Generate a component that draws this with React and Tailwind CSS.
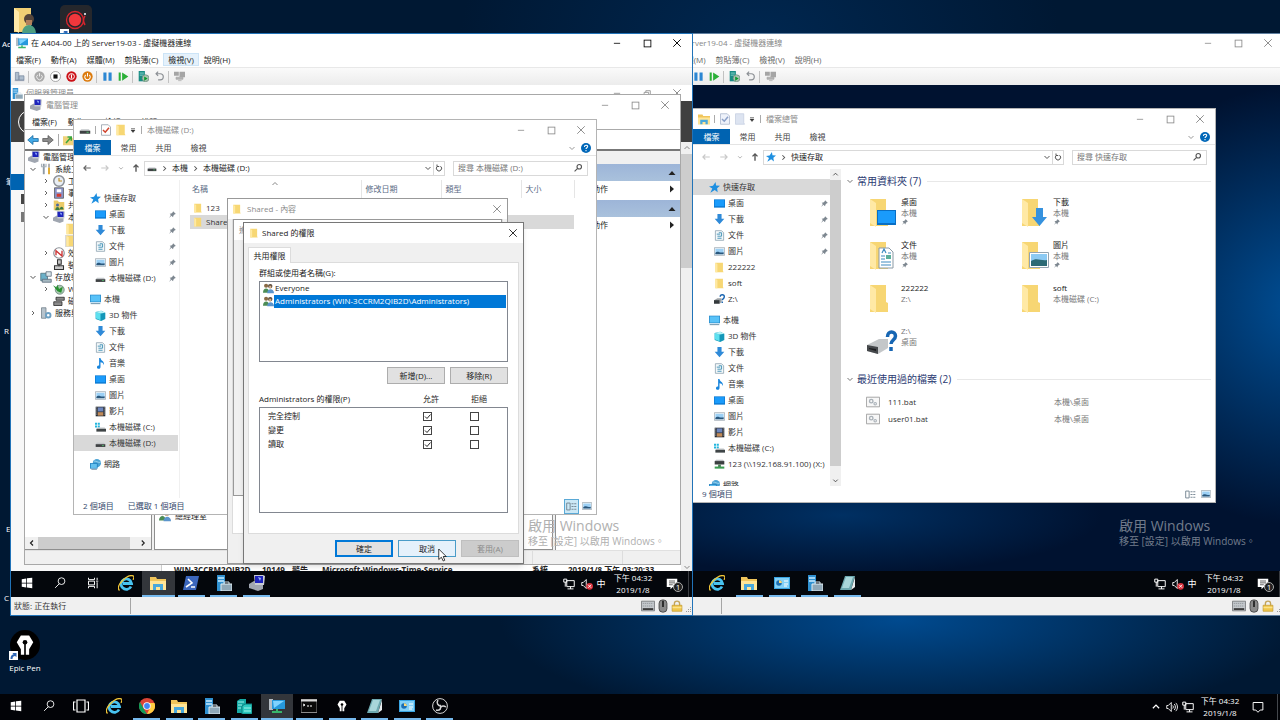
import React, { useState } from 'react';

const glyphs = {
    min: <path d="M3 8.5h10" stroke="currentColor" strokeWidth="1.3" />,
    max: <rect x="2" y="2" width="12" height="12" fill="none" stroke="currentColor" strokeWidth="1.5" />,
    restore: <path d="M2 6h8v8H2zM5 6V3h8v8h-3" fill="none" stroke="currentColor" strokeWidth="1.4" />,
    close: <path d="M2 2l12 12M14 2l-12 12" stroke="currentColor" strokeWidth="1.5" />,
    left: <path d="M14 8H3M7 4L3 8l4 4" fill="none" stroke="currentColor" strokeWidth="1.8" />,
    right: <path d="M2 8h11M9 4l4 4-4 4" fill="none" stroke="currentColor" strokeWidth="1.8" />,
    up: <path d="M8 14V3M4 7l4-4 4 4" fill="none" stroke="currentColor" strokeWidth="2.2" />,
    chevDown: <path d="M3 6l5 5 5-5" fill="none" stroke="currentColor" strokeWidth="2" />,
    chevUp: <path d="M3 10l5-5 5 5" fill="none" stroke="currentColor" strokeWidth="2" />,
    chevRight: <path d="M6 4l4 4-4 4" fill="none" stroke="currentColor" strokeWidth="1.8" />,
    chevLeft: <path d="M10 3L5 8l5 5" fill="none" stroke="currentColor" strokeWidth="2.4" />,
    triUp: <path d="M1 12l7-8 7 8z" fill="currentColor" />,
    triRight: <path d="M4 1l8 7-8 7z" fill="currentColor" />,
    quick: <path d="M4 5h8M4 8h8l-4 5z" fill="currentColor" stroke="currentColor" />,
    refresh: <path d="M5 4.500A5.200 5.200 0 1 0 11 4.500M4 1v4h4.500" fill="none" stroke="currentColor" strokeWidth="2" />,
    search: (
        <g fill="none" stroke="currentColor" strokeWidth="1.8">
            <circle cx="10" cy="6" r="3.600" />
            <path d="M7.500 8.500l-5 5" />
        </g>
    ),
    help: (
        <g>
            <circle cx="8" cy="8" r="8" fill="#0067b8" />
            <path d="M5.500 6.200c0-3.600 5.200-3.400 5.200-.5C10.700 7.500 8 7.600 8 9.600M8 11.300v1.700" fill="none" stroke="#fff" strokeWidth="1.700" />
        </g>
    ),
    pin: <path d="M9 2l5 5-2 .5-2.500 2.500-.5 3-3-3-4 4 3-5-2-2.500 3-.5L8.500 4z" fill="#7d8790" />,
    star: <path d="M9.500 0l.8 5 5.700.5-4.200 3.500.8 6-4.300-3.500L2 15.500l2.800-6L0 6.500l5.800-1z" fill="#1e8fe0" />,
    folder: (
        <g>
            <path d="M2 1h11v12l1 2H2z" fill="#f7d774" />
            <path d="M2 1l3 2v12H2z" fill="#ffe9a2" />
        </g>
    ),
    desktop: (
        <g>
            <path d="M0 2h16v12H0z" fill="#0b78d0" />
            <path d="M1 3h14v9H1z" fill="#1a9bfb" />
        </g>
    ),
    download: <path d="M5 0h6v7h4l-7 8-7-8h4z" fill="#2f8ad8" />,
    doc: (
        <g>
            <path d="M2 1h9l3 3v11H2z" fill="#f4f8fa" stroke="#7c95a3" />
            <path d="M4 6h5M7 4h4v5M5 9h6M5 12h6" fill="none" stroke="#4795b8" strokeWidth="1.400" />
        </g>
    ),
    picture: (
        <g>
            <path d="M.5 2.500h15v11H.5z" fill="#fff" stroke="#8796a2" />
            <path d="M2 4h12v8H2z" fill="#9cd0f5" />
            <path d="M2 10c4-4 6 1 12-1v3H2z" fill="#2a577c" />
        </g>
    ),
    drive: (
        <g>
            <path d="M3 7h10l2 2H1z" fill="#c2c6c9" />
            <path d="M1 9h14v4H1z" fill="#3e4143" />
            <path d="M10 11h3" stroke="#57d977" />
        </g>
    ),
    driveC: (
        <g>
            <path d="M0 1h3v3H0zM4 1h3v3H4zM0 5h3v3H0zM4 5h3v3H4z" fill="#22b5dd" />
            <path d="M4 8h10l2 2H2z" fill="#c2c6c9" />
            <path d="M2 10h14v4H2z" fill="#3f4547" />
        </g>
    ),
    driveNet: (
        <g>
            <path d="M1 3h14v5H1z" fill="#3b3f40" />
            <path d="M3 1h10l2 2H1z" fill="#b9bdc0" />
            <path d="M6 8h4v4H6z" fill="#4b7d55" />
            <path d="M1 11h14v3H1z" fill="#3b9c50" />
        </g>
    ),
    driveUnknown: (
        <g>
            <path d="M0 9l5-3h6v6l-3 2H0z" fill="#9fa4a7" />
            <path d="M0 9h8v5H0z" fill="#34393c" />
            <path d="M9 4c0-4 6-4 6 0 0 3-3 3-3 5M12 11v2" fill="none" stroke="#1763b0" strokeWidth="2" />
        </g>
    ),
    pc: (
        <g>
            <path d="M0 1h16v11H0z" fill="#2689c9" />
            <path d="M1 2h14v9H1z" fill="#58c2f8" />
            <path d="M1 14h14" stroke="#7196ad" strokeWidth="1.500" />
        </g>
    ),
    cube: (
        <g>
            <path d="M1 3l8-2 6 3v9l-6 3-8-3z" fill="#1397b8" />
            <path d="M1 3l7 2v10l-7-3z" fill="#5de0ef" />
            <path d="M1 3l8-2 6 3-7 1z" fill="#b4f3f8" />
        </g>
    ),
    music: <path d="M6 0h2c0 4 6 4 5 10-1-3-3-4-5-4v7c0 4-6 3-5 0 0-2 2-2 3-2z" fill="#1785dd" />,
    video: (
        <g>
            <path d="M1 1h14v14H1z" fill="#262b33" />
            <path d="M4 2h8v6H4z" fill="#6d86bd" />
            <path d="M4 9h8v5H4z" fill="#c08a58" />
            <path d="M2.500 2v12M13.500 2v12" stroke="#dedede" strokeDasharray="1.500 1.500" />
        </g>
    ),
    network: (
        <g>
            <circle cx="10" cy="6" r="6" fill="#4ba3d5" />
            <path d="M6 3c3 0 5 2 9 2" fill="none" stroke="#bfe6f8" />
            <path d="M0 6h11v8H0z" fill="#1879bb" />
            <path d="M1 7h9v6H1z" fill="#64c0ee" />
            <path d="M2 15.500h8" stroke="#476d87" />
        </g>
    ),
    checkDoc: (
        <g>
            <path d="M2 1h9l3 3v11H2z" fill="#fff" stroke="#8b96a3" />
            <path d="M4 8l3 3 5-6" fill="none" stroke="#d0432c" strokeWidth="2" />
        </g>
    ),
    checkDocOff: (
        <g>
            <path d="M2 1h9l3 3v11H2z" fill="#eef2fa" stroke="#a7b3c9" />
            <path d="M4 8l3 3 5-6" fill="none" stroke="#8ba0c8" strokeWidth="2" />
        </g>
    ),
    folderOff: <path d="M2 1h11v12l1 2H2z" fill="#dde4f1" stroke="#c4cee0" />,
    users: (
        <g>
            <circle cx="4.500" cy="4" r="3" fill="#8a6a45" />
            <path d="M0 14c0-8 9-8 9 0z" fill="#4c8c55" />
            <circle cx="10.500" cy="4.500" r="3.200" fill="#5c4b3b" />
            <path d="M9 4h3v4H9z" fill="#d9b38c" />
            <path d="M6 15c0-8 10-8 10 0z" fill="#5b95cc" />
        </g>
    ),
    server: (
        <g>
            <path d="M1 0h8v16H1z" fill="#3091d1" />
            <path d="M2 3h6M2 6h6" stroke="#c9ebff" strokeWidth="1.300" />
            <path d="M5 9h11v7H5z" fill="#8fa8b8" stroke="#e1edf3" />
            <path d="M8 9V7h5v2" fill="none" stroke="#d7e5ed" />
        </g>
    ),
    ie: (
        <g fill="none">
            <path d="M13 11.500A5.200 5.200 0 1 1 13.500 8.500H5" stroke="#48c3f0" strokeWidth="2.800" />
            <path d="M1.500 15.500C-3 11 9-1 15 .8c1.500.8.8 2.600 0 4" stroke="#f2c738" strokeWidth="1.300" />
        </g>
    ),
    explorer: (
        <g>
            <path d="M0 2h6l1 2h9v11H0z" fill="#f0c55b" />
            <path d="M0 6h16v9H0z" fill="#ffe597" />
            <path d="M3 15V9h10v6h-3v-3H6v3z" fill="#48a8dc" />
        </g>
    ),
    powershell: (
        <g>
            <path d="M3 1h13l-3 14H0z" fill="#3b66bd" />
            <path d="M5 4l4 4-6 4M8 12h4" fill="none" stroke="#fff" strokeWidth="1.600" />
        </g>
    ),
    mgmt: (
        <g>
            <path d="M0 9l5-3 9 3v5l-5 2-9-3z" fill="#a0a6b0" />
            <path d="M5 0h9l2 1-1 9H6z" fill="#c8ccd3" />
            <path d="M6 1h8v7H6z" fill="#1d23bb" />
            <path d="M9 2l2 4 1-3z" fill="#98b6ff" />
        </g>
    ),
    win: <path d="M1 3l6-1v5.500H1zM8 1.800L15 1v6.500H8zM1 8.500h6V14l-6-1zM8 8.500h7V15l-7-1z" fill="#fff" />,
    find: (
        <g fill="none" stroke="#fff" strokeWidth="1.200">
            <circle cx="10" cy="5.500" r="4.500" />
            <path d="M7 9l-5.500 5.500" />
        </g>
    ),
    taskOld: <path d="M2 1v2.500h8V1M2 15v-2.500h8V15M2 5.500h8v5H2zM13.500 1v3M13.500 7v8M12 5.500h3" fill="none" stroke="#fff" strokeWidth="1.300" />,
    taskView: <path d="M4 2h8v12H4zM2.500 4H.5v8h2M13.500 4h2v8h-2" fill="none" stroke="#fff" strokeWidth="1.200" />,
    chrome: (
        <g>
            <circle cx="8" cy="8" r="8" fill="#db4437" />
            <path d="M1 4l5 9 2 3A8 8 0 0 1 1 4z" fill="#0f9d58" />
            <path d="M8 5h7.500A8 8 0 0 1 8 16l4-8z" fill="#ffcd40" />
            <circle cx="8" cy="8" r="3.800" fill="#fff" />
            <circle cx="8" cy="8" r="2.900" fill="#4285f4" />
        </g>
    ),
    hyperv: (
        <g>
            <path d="M1 3l3-2h6v14H1z" fill="#16a9a5" />
            <path d="M9 6h7v10H6V8z" fill="#2cc9bf" stroke="#0b7f7d" />
            <path d="M2 4h6M2 7h4M2 10h3M8 10h7M8 13h7" stroke="#9ff3ea" />
        </g>
    ),
    vmconnect: (
        <g>
            <path d="M0 1h4v11H0z" fill="#b5bdc4" />
            <path d="M3 2h13v9H3z" fill="#2699dc" />
            <path d="M4 3h11l-10 7z" fill="#7ed3ff" />
            <path d="M3 14h10M8 11v3" stroke="#39b56b" strokeWidth="2" />
        </g>
    ),
    cmd: (
        <g>
            <path d="M0 1.500h16v13H0z" fill="#0a0a0a" stroke="#8b8b8b" />
            <path d="M0 2.500h16" stroke="#d8d8d8" strokeWidth="2" />
            <path d="M2 6l2 1-2 1M6 8h2M9 8h2" fill="none" stroke="#fff" />
        </g>
    ),
    pen: (
        <g>
            <path d="M5 1h6l3 5-3 5v4H5v-4L2 6z" fill="#fff" />
            <circle cx="8" cy="6" r="1.700" fill="#000" />
            <path d="M8 7v9" stroke="#000" strokeWidth="1.200" />
        </g>
    ),
    notepad: (
        <g>
            <path d="M5 1h10l-4 14H0z" fill="#6ea9b0" />
            <path d="M6 2h7L9 13H2z" fill="#a9d6da" />
            <path d="M11 15l4-3V2z" fill="#e9eef0" />
        </g>
    ),
    panel: (
        <g>
            <path d="M0 2h16v12H0z" fill="#3aa5e3" />
            <path d="M1 3h14v10H1z" fill="#82d0f7" />
            <circle cx="5" cy="8" r="2.800" fill="#1d6eb2" />
            <path d="M5 8V5.200A2.800 2.800 0 0 1 7.800 8z" fill="#ffd873" />
            <path d="M10 6h4M10 9h4M10 11h3" stroke="#fff" />
        </g>
    ),
    obs: (
        <g fill="none" stroke="#d5d5d5">
            <circle cx="8" cy="8" r="7.400" />
            <path d="M6 2c-2 3 0 6 3 6M14 9c-3-2-6-1-6 3M4 12c4 1 6-2 4-5" strokeWidth="1.500" />
        </g>
    ),
    trayNet: <path d="M5 3.500h10v8H5zM6 14.500h8M10 11.500v3M1 1.500h4v4H1zM3 5.500v6" fill="none" stroke="#fff" strokeWidth="1.300" />,
    mute: (
        <g>
            <path d="M1 6h2l4-4v12l-4-4H1z" fill="none" stroke="#fff" strokeWidth="1.200" />
            <circle cx="11.500" cy="11" r="4.500" fill="#d8313c" />
            <path d="M9.500 9l4 4M13.500 9l-4 4" stroke="#fff" strokeWidth="1.200" />
        </g>
    ),
    sound: <path d="M1 6h2l4-4v12l-4-4H1zM9 6c1 1 1 3 0 4M11 4c2 2 2 6 0 8M13 2.500c3 3 3 8 0 11" fill="none" stroke="#fff" strokeWidth="1.200" />,
    note: (
        <g>
            <path d="M1 1h14v11H9l-3 3v-3H1z" fill="#fff" />
            <path d="M4 4h8M4 6.500h8M4 9h5" stroke="#333" />
        </g>
    ),
    noteEmpty: <path d="M1.500 2h13v10H11l-3 3-3-3H1.500z" fill="none" stroke="#fff" strokeWidth="1.300" />,
    cad: (
        <g fill="#aebdcd" stroke="#71819a">
            <path d="M2 2h5v11H2z" />
            <path d="M7.500 7h7v6h-7z" />
            <path d="M1 14h14" />
        </g>
    ),
    powerOff: (
        <g fill="none">
            <circle cx="8" cy="8" r="7.500" fill="#aaa" />
            <path d="M5.500 5.500a4 4 0 1 0 5 0M8 3v5" stroke="#eee" strokeWidth="1.400" />
        </g>
    ),
    stop: (
        <g>
            <circle cx="8" cy="8" r="7.300" fill="#fff" stroke="#888" />
            <path d="M5 5h6v6H5z" fill="#111" />
        </g>
    ),
    shutdown: (
        <g fill="none">
            <circle cx="8" cy="8" r="7.500" fill="#cc1016" />
            <circle cx="8" cy="8" r="4.200" stroke="#fff" strokeWidth="1.400" />
            <path d="M8 5v6" stroke="#fff" strokeWidth="1.700" />
        </g>
    ),
    save: (
        <g fill="none">
            <circle cx="8" cy="8" r="7.500" fill="#dc7b0e" />
            <path d="M5.500 5.500a4 4 0 1 0 5 0M8 3v5" stroke="#fff" strokeWidth="1.500" />
        </g>
    ),
    pause: <path d="M2 2h4.500v12H2zM9.500 2H14v12H9.500z" fill="#2c87d3" />,
    reset: <path d="M1 2h3v12H1zM6 2l9 6-9 6z" fill="#2bb038" />,
    checkpoint: (
        <g>
            <path d="M1 0h9v15H1z" fill="#198c84" />
            <path d="M2.500 3h6M2.500 6h6" stroke="#b5f0e8" />
            <circle cx="11" cy="10.500" r="5" fill="#a9c4b2" stroke="#668877" />
            <path d="M9 8l5 3-5 3z" fill="#0a9b2b" />
        </g>
    ),
    revert: <path d="M3 4h6c6 0 6 9 0 9H6M6 1L3 4l3 3" fill="none" stroke="#8b8f94" strokeWidth="1.700" />,
    enhanced: (
        <g>
            <path d="M0 1h7v6H0zM8 1h8v8H8z" fill="#a5a5a5" />
            <path d="M3 9h10v3H3zM6 14h5" fill="#b2b2b2" stroke="#a5a5a5" />
        </g>
    ),
    backBlue: <path d="M8 2v4h7v4H8v4L1 8z" fill="#43a9e6" stroke="#19699f" />,
    forwardGray: <path d="M8 2v4H1v4h7v4l7-6z" fill="#8b8b8b" stroke="#555" />,
    upFolder: (
        <g>
            <path d="M0 3h6l1 2h9v10H0z" fill="#efd27b" />
            <path d="M4 12l7-8M6 4h5v5" fill="none" stroke="#3ca63c" strokeWidth="2" />
        </g>
    ),
    tools: (
        <g fill="none" strokeWidth="2.500">
            <path d="M5 1v14" stroke="#8e9aa5" />
            <path d="M2 1v4h6V1" stroke="#aab4bc" strokeWidth="1.500" />
            <path d="M12 6v9" stroke="#dfa829" />
            <path d="M12 1v5" stroke="#777" strokeWidth="1.500" />
        </g>
    ),
    clock: (
        <g>
            <circle cx="8" cy="8" r="7" fill="#e9eef4" stroke="#8a8f96" strokeWidth="2" />
            <path d="M8 4v4h4" fill="none" stroke="#c08a1d" strokeWidth="1.500" />
        </g>
    ),
    events: (
        <g>
            <path d="M2 1h12v14H2z" fill="#8a93c8" stroke="#555" />
            <path d="M5 3h6v4H5z" fill="#fff" />
            <path d="M5 9h6v4H5z" fill="#d63c2e" />
        </g>
    ),
    shares: (
        <g>
            <path d="M1 2h5l2 2h7v11H1z" fill="#ebcb68" />
            <circle cx="6" cy="8" r="2" fill="#4b69a0" />
            <path d="M3 15c0-6 6-6 6 0zM9 14c0-5 5-5 5 0z" fill="#3c7b42" />
        </g>
    ),
    perf: (
        <g>
            <circle cx="8" cy="8" r="7" fill="#fff" stroke="#8a8f96" strokeWidth="1.500" />
            <path d="M4 11V5l8 7V5" fill="none" stroke="#c33" strokeWidth="1.800" />
        </g>
    ),
    device: <path d="M6 1h5v6H6zM2 9h12v5H2zM8 7v3" fill="#c9c9c9" stroke="#333" strokeWidth="1.400" />,
    storage: (
        <g>
            <path d="M1 3h9v10H1z" fill="#6cb1c9" stroke="#4a6c78" />
            <path d="M8 1h7v6H8z" fill="#d9e6ea" stroke="#567" />
            <path d="M3 11h12v4H3z" fill="#a7bac2" stroke="#567" />
        </g>
    ),
    backup: (
        <g>
            <circle cx="9" cy="9" r="6" fill="#a9c9b0" stroke="#68807a" />
            <path d="M0 3l5 3 1-4 2 6 5-3-2 8-5-2z" fill="#27902f" />
        </g>
    ),
    disk: <path d="M4 3h11v4H4zM1 9h11v5H1z" fill="#8b8b8b" stroke="#222" />,
    services: (
        <g>
            <path d="M2 1h6v14H2z" fill="#b7c3cc" stroke="#6d7b86" />
            <circle cx="11" cy="11" r="3" fill="none" stroke="#6ca0c4" strokeWidth="2.500" />
        </g>
    ),
    bat: (
        <g>
            <path d="M.5 2.500h15v11H.5z" fill="#f7f7f7" stroke="#9c9c9c" />
            <circle cx="6" cy="7" r="2" fill="none" stroke="#a9b1b8" strokeWidth="1.600" />
            <circle cx="10.500" cy="10" r="1.400" fill="none" stroke="#a9b1b8" strokeWidth="1.300" />
        </g>
    ),
    details: <path d="M1 3h5v10H1zM8 4h3M12 4h3M8 8h3M12 8h3M8 12h3M12 12h3" fill="none" stroke="#6e7f8c" strokeWidth="1.300" />,
    lock: (
        <g>
            <path d="M4.500 8V5a3.500 3.500 0 0 1 7 0v3" fill="none" stroke="#c3a45a" strokeWidth="1.800" />
            <path d="M1.500 7h13v8h-13z" fill="#efc64b" stroke="#c39b31" />
            <path d="M2 10h12" stroke="#fbe28a" strokeWidth="2" />
        </g>
    ),
    mouse: (
        <g>
            <rect x="3.500" y="1" width="9" height="14" rx="4" fill="#8a8a8a" stroke="#444" />
            <path d="M8 2v7" stroke="#222" strokeWidth="2" />
        </g>
    ),
    keyboard: (
        <g>
            <path d="M.5 2.500h15v11H.5z" fill="#c4c8cc" stroke="#77797b" />
            <path d="M2 5h12M2 8h12" stroke="#8d9297" strokeDasharray="1.500 .8" />
            <path d="M2 11.500h12" stroke="#333" strokeWidth="2" />
        </g>
    ),
    grip: <path d="M12 4h2v2h-2zM8 8h2v2H8zM12 8h2v2h-2zM4 12h2v2H4zM8 12h2v2H8zM12 12h2v2h-2z" fill="#9a9a9a" />,
};

const Icon = ({ name, className = 'size-[10px]' }) => (
    <svg viewBox="0 0 16 16" className={`shrink-0 ${className}`} aria-hidden="true">
        {glyphs[name]}
    </svg>
);

const BigFolder = ({ overlay }) => (
    <svg viewBox="0 0 32 32" className="size-8 shrink-0" aria-hidden="true">
        {overlay !== 'drive' && (
            <g>
                <path d="M4 3h16v17l2 1v9H4z" fill="#f7d673" />
                <path d="M4 3l6 4v24l-6-4z" fill="#ffe9a5" />
            </g>
        )}
        {overlay === 'desktop' && (
            <g>
                <path d="M11 14h19v15H11z" fill="#0a6fc4" />
                <path d="M12 15h17v12H12z" fill="#1a9bfb" />
            </g>
        )}
        {overlay === 'download' && <path d="M18 12h7v9h4l-7.500 9-7.500-9h4z" fill="#3692de" />}
        {overlay === 'doc' && (
            <g>
                <path d="M13 9h10l4 4v16H13z" fill="#fff" stroke="#8b9aa5" />
                <path d="M16 14l2-4 2 4M22 14h3M15 17h4M15 20h4M15 23h10M15 26h10" fill="none" stroke="#3e8cc0" strokeWidth="1.200" />
                <path d="M20 16h5v4h-5z" fill="#5caf9b" />
            </g>
        )}
        {overlay === 'picture' && (
            <g>
                <path d="M11.500 13.500h19v15h-19z" fill="#fff" stroke="#94a4b0" />
                <path d="M13 15h16v12H13z" fill="#8ccaf3" />
                <path d="M13 22c6-4 9 0 16-1v6H13z" fill="#2c6a74" />
            </g>
        )}
        {overlay === 'drive' && (
            <g>
                <path d="M1 20l12-6h9v9l-10 6-11-3z" fill="#c4c7c9" />
                <path d="M1 20l11 2v7l-11-3z" fill="#45484b" />
                <path d="M3 23l7 1v2l-7-2z" fill="#1c1e20" />
                <path d="M21.500 12c0-7 8-6 8-1 0 4-4.500 4-4.500 8M25 22v4" fill="none" stroke="#1766b3" strokeWidth="3.500" />
            </g>
        )}
    </svg>
);

const WindowButtons = ({ middle = 'max', color = 'text-[#8a8a8a]' }) => (
    <div className={`ml-auto flex self-stretch ${color}`}>
        <button aria-label="最小化" className="flex w-[30px] items-center justify-center"><Icon name="min" /></button>
        <button aria-label="最大化" className="flex w-[30px] items-center justify-center"><Icon name={middle} className="size-[9px]" /></button>
        <button aria-label="關閉" className="flex w-[30px] items-center justify-center"><Icon name="close" /></button>
    </div>
);

const Clock = () => (
    <div className="w-12 text-center leading-3 text-white">
        <div>下午 04:32</div>
        <div>2019/1/8</div>
    </div>
);

const TaskButton = ({ item }) => (
    <button
        aria-label={item.label}
        className={`flex flex-1 flex-col items-center ${item.active ? 'bg-[#33363b]' : ''}`}
    >
        <span className="flex flex-1 items-center"><Icon name={item.icon} className={item.small ? 'size-3' : 'size-4'} /></span>
        <span className={`h-[2px] ${item.active ? 'w-full' : 'w-[27px]'} ${item.open ? 'bg-[#76b9ed]' : ''}`} />
    </button>
);

const GuestTaskbar = ({ items }) => (
    <div className="relative flex h-[26px] shrink-0 items-stretch bg-[#04070c]">
        <div className="flex w-[262px]">
            {items.map((item) => <TaskButton key={item.label} item={item} />)}
        </div>
        <div className="ml-auto flex items-center pr-[3px] text-white">
            <Icon name="trayNet" className="size-3" />
            <Icon name="mute" className="ml-[6px] size-3" />
            <span className="ml-[2px] w-3 text-center text-[9px]">中</span>
            <div className="ml-[2px]"><Clock /></div>
            <button aria-label="通知" className="relative ml-[3px] flex w-6 justify-center">
                <Icon name="note" className="size-3" />
                <span className="absolute top-1 left-[13px] flex size-[10px] items-center justify-center rounded-full border border-[#aaa] bg-[#222] leading-none">1</span>
            </button>
            <span className="ml-1 h-[26px] w-px bg-[#3a3d42]" />
        </div>
    </div>
);

const Watermark = ({ color }) => (
    <div className={`pointer-events-none absolute top-[432px] left-[517px] whitespace-nowrap ${color}`}>
        <div className="text-[14px] leading-[18px]">啟用 Windows</div>
        <div className="text-[10px] leading-3">移至 [設定] 以啟用 Windows。</div>
    </div>
);

const vmTools = ['cad', '|', 'powerOff', 'stop', 'shutdown', 'save', '|', 'pause', 'reset', '|', 'checkpoint', 'revert', '|', 'enhanced'];

const VmWindow = ({ title, active, className, children, status }) => (
    <section className={`absolute top-[33px] flex w-[683px] flex-col border bg-white ${active ? 'border-[#2173b8]' : 'border-[#5f7fa0]'} ${className}`}>
        <header className={`flex h-[18px] items-center pl-[5px] ${active ? 'text-[#222]' : 'text-[#888]'}`}>
            <Icon name="vmconnect" className="size-3" />
            <h1 className="ml-[3px]">{title}</h1>
            <WindowButtons color={active ? 'text-black' : 'text-[#8a8a8a]'} />
        </header>
        <div className={`flex h-[15px] items-center ${active ? 'text-[#222]' : 'text-[#666]'}`}>
            {['檔案(F)', '動作(A)', '媒體(M)', '剪貼簿(C)', '檢視(V)', '說明(H)'].map((name) => (
                <button
                    key={name}
                    className={`h-[13px] border px-1 ${active && name === '檢視(V)' ? 'border-[#cce4f7] bg-[#e5f1fb]' : 'border-transparent'}`}
                >
                    {name}
                </button>
            ))}
        </div>
        <div className="flex h-[18px] items-center border-t border-[#e8e8e8] bg-linear-to-b from-[#fafafa] to-[#ececec]">
            {vmTools.map((name, i) => (
                name === '|'
                    ? <span key={i} className="mr-[2px] ml-px h-3 w-px bg-[#c2c2c2]" />
                    : <button key={i} aria-label={name} className="flex w-4 justify-center"><Icon name={name} className="size-[11px]" /></button>
            ))}
        </div>
        <div className="relative flex h-[512px] flex-col overflow-hidden">{children}</div>
        <footer className="flex h-[18px] items-center bg-[#f0f0f0] pl-[3px] text-[#333]">
            <span className="w-[116px]">{status}</span>
            <span className="h-4 w-px bg-[#a5a5a5]" />
            <div className="ml-auto flex items-center gap-px">
                <Icon name="keyboard" className="size-[14px]" />
                <Icon name="mouse" className="size-[14px]" />
                <Icon name="lock" className="size-3" />
                <Icon name="grip" className="size-2 self-end" />
            </div>
        </footer>
    </section>
);

const NavTree = ({ groups, selected }) => (
    <div className="flex flex-col gap-[5px]">
        {groups.map((group) => (
            <ul key={group[0][1]}>
                {group.map(([icon, label, pinned], i) => (
                    <li key={label}>
                        <a
                            href="#"
                            className={`flex h-4 items-center whitespace-nowrap ${i === 0 ? 'gap-[3px] pl-[16px]' : 'gap-[3px] pl-[21px]'} ${selected === label ? 'bg-[#d9d9d9]' : ''}`}
                        >
                            <Icon name={icon} className="size-[11px]" />
                            {label}
                            {pinned && <Icon name="pin" className="mr-px ml-auto size-[9px]" />}
                        </a>
                    </li>
                ))}
            </ul>
        ))}
    </div>
);

const Explorer = ({ title, icon, docIcon, folderIcon, path, pathIcon, canGoBack, status, details, className, children }) => (
    <section className={`absolute flex w-[524px] flex-col border border-[#b4b4b4] bg-white text-[#333] ${className}`}>
        <header className="flex h-5 shrink-0 items-center pl-[5px]">
            <Icon name={icon} className="size-3" />
            <span className="ml-1 h-2 w-px bg-[#aaa]" />
            <Icon name={docIcon} className="ml-1 size-3" />
            <Icon name={folderIcon} className="ml-[3px] size-3" />
            <Icon name="quick" className="ml-[2px] size-2" />
            <span className="ml-1 h-2 w-px bg-[#aaa]" />
            <h2 className="ml-[5px] text-[#8a8a8a]">{title}</h2>
            <WindowButtons />
        </header>
        <div className="flex h-4 shrink-0 items-stretch border-b border-[#e4e4e4] pr-[2px]">
            <button className="w-[37px] bg-[#0063b1] text-white">檔案</button>
            {['常用', '共用', '檢視'].map((tab) => (
                <button key={tab} className="w-[35px] text-[#444]">{tab}</button>
            ))}
            <button aria-label="展開功能區" className="ml-auto flex w-3 items-center justify-center text-[#999]"><Icon name="chevDown" className="size-2" /></button>
            <button aria-label="說明" className="flex w-4 items-center justify-center"><Icon name="help" /></button>
        </div>
        <div className="flex h-6 shrink-0 items-center pr-2 pl-[5px]">
            <button aria-label="上一頁" className={`flex w-4 justify-center ${canGoBack ? 'text-[#666]' : 'text-[#c8c8c8]'}`}><Icon name="left" /></button>
            <button aria-label="下一頁" className="flex w-5 justify-center text-[#c8c8c8]"><Icon name="right" /></button>
            <button aria-label="最近的位置" className="flex w-3 justify-center text-[#999]"><Icon name="chevDown" className="size-[6px]" /></button>
            <button aria-label="上移" className="flex w-[17px] justify-center text-[#555]"><Icon name="up" /></button>
            <div className="flex h-[15px] flex-1 items-stretch border border-[#d9d9d9] text-[#555]">
                <div className="flex flex-1 items-center pl-[2px]">
                    <Icon name={pathIcon} />
                    {path.map((part) => (
                        <React.Fragment key={part}>
                            <Icon name="chevRight" className="mx-[3px] size-[9px]" />
                            <a href="#" className="text-[#222]">{part}</a>
                        </React.Fragment>
                    ))}
                    <Icon name="chevDown" className="mr-px ml-auto size-2" />
                </div>
                <button aria-label="重新整理" className="flex w-[11px] items-center justify-center border-l border-[#d9d9d9]"><Icon name="refresh" className="size-2" /></button>
            </div>
            <label className="ml-2 flex h-[15px] w-[135px] items-center border border-[#d9d9d9] px-1 text-[#555]">
                <input type="text" aria-label="搜尋" placeholder={`搜尋 ${path[path.length - 1]}`} className="min-w-0 flex-1 outline-none placeholder:text-[#777]" />
                <Icon name="search" />
            </label>
        </div>
        <div className="flex min-h-0 flex-1">{children}</div>
        <footer className="flex h-4 shrink-0 items-center gap-[14px] pr-[2px] pl-[9px] text-[#33476a]">
            {status.map((text) => <span key={text}>{text}</span>)}
            <div className="ml-auto flex">
                <button aria-label="詳細資料" className={`flex h-[15px] w-[15px] items-center justify-center border ${details ? 'border-[#5aa9d6] bg-[#cbe8f6]' : 'border-transparent'}`}><Icon name="details" className="size-[11px]" /></button>
                <button aria-label="大圖示" className="flex h-[15px] w-[15px] items-center justify-center"><Icon name="picture" className="size-[10px]" /></button>
            </div>
        </footer>
    </section>
);

const pcItems = [
    ['pc', '本機'],
    ['cube', '3D 物件'],
    ['download', '下載'],
    ['doc', '文件'],
    ['music', '音樂'],
    ['desktop', '桌面'],
    ['picture', '圖片'],
    ['video', '影片'],
    ['driveC', '本機磁碟 (C:)'],
];

const quickItems = [
    ['star', '快速存取'],
    ['desktop', '桌面', true],
    ['download', '下載', true],
    ['doc', '文件', true],
    ['picture', '圖片', true],
];

const DriveExplorer = () => (
    <Explorer
        title="本機磁碟 (D:)"
        icon="drive"
        docIcon="checkDoc"
        folderIcon="folder"
        pathIcon="drive"
        path={['本機', '本機磁碟 (D:)']}
        canGoBack
        details
        status={['2 個項目', '已選取 1 個項目']}
        className="top-[34px] left-[62px] h-[396px]"
    >
        <nav className="w-[106px] overflow-hidden border-r border-[#f0f0f0] pt-[10px] pr-px">
            <NavTree
                groups={[
                    [...quickItems, ['drive', '本機磁碟 (D:) ', true]],
                    [...pcItems, ['drive', '本機磁碟 (D:)']],
                    [['network', '網路']],
                ]}
                selected="本機磁碟 (D:)"
            />
        </nav>
        <div className="relative flex-1 pl-[10px]">
            <Icon name="chevUp" className="absolute top-0 left-[91px] size-2 text-[#888]" />
            <table className="table-fixed border-collapse text-left">
                <thead>
                    <tr className="h-[18px] text-[#5a6b85]">
                        <th className="w-[171px] border-r border-[#e5e5e5] pl-[2px] font-normal">名稱</th>
                        <th className="w-[80px] border-r border-[#e5e5e5] pl-1 font-normal">修改日期</th>
                        <th className="w-[80px] border-r border-[#e5e5e5] pl-1 font-normal">類型</th>
                        <th className="w-[53px] border-r border-[#e5e5e5] pl-1 font-normal">大小</th>
                    </tr>
                </thead>
                <tbody>
                    <tr className="h-[3px]"><td colSpan={4} /></tr>
                    {['123', 'Shared'].map((name) => (
                        <tr key={name} className={`h-[14px] ${name === 'Shared' ? 'bg-[#d9d9d9]' : ''}`}>
                            <td className="pl-[3px]">
                                <span className="flex items-center gap-[3px]"><Icon name="folder" />{name}</span>
                            </td>
                            <td colSpan={3} />
                        </tr>
                    ))}
                </tbody>
            </table>
        </div>
    </Explorer>
);

const frequent = [
    ['desktop', '桌面', '本機', true],
    ['download', '下載', '本機', true],
    ['doc', '文件', '本機', true],
    ['picture', '圖片', '本機', true],
    ['', '222222', 'Z:\\'],
    ['', 'soft', '本機磁碟 (C:)'],
    ['drive', 'Z:\\', '桌面'],
];

const GroupHeading = ({ text }) => (
    <h3 className="flex h-4 items-center gap-[3px] text-[10px] text-[#2b3a72]">
        <Icon name="chevDown" className="size-2 text-[#777]" />
        {text}
        <span className="ml-[3px] h-px flex-1 bg-[#e8e8e8]" />
    </h3>
);

const QuickExplorer = () => (
    <Explorer
        title="檔案總管"
        icon="explorer"
        docIcon="checkDocOff"
        folderIcon="folderOff"
        pathIcon="star"
        path={['快速存取']}
        status={['9 個項目']}
        className="top-[23px] left-[90px] h-[395px]"
    >
        <nav className="w-[137px] overflow-hidden pt-[10px]">
            <NavTree
                groups={[
                    [...quickItems, ['folder', '222222'], ['folder', 'soft'], ['driveUnknown', 'Z:\\']],
                    [...pcItems, ['driveNet', '123 (\\\\192.168.91.100) (X:)']],
                    [['network', '網路']],
                ]}
                selected="快速存取"
            />
        </nav>
        <div className="flex w-[11px] flex-col items-center bg-[#f0f0f0] text-[#444]">
            <Icon name="chevUp" className="my-[2px] size-[7px]" />
            <span className="w-full flex-1 bg-[#cdcdcd]" />
            <Icon name="chevDown" className="mt-[11px] mb-[2px] size-[7px]" />
        </div>
        <div className="flex-1 pt-[4px] pr-1 pl-[5px]">
            <GroupHeading text="常用資料夾 (7)" />
            <ul className="mt-[7px] ml-[20px] grid grid-cols-[152px_152px]">
                {frequent.map(([overlay, name, place, pinned]) => (
                    <li key={name} className="flex h-[43px] items-start gap-[3px] leading-[11px]">
                        <BigFolder overlay={overlay} />
                        <div>
                            <div className={overlay === 'drive' ? 'text-[#777]' : 'text-[#222]'}>{name}</div>
                            <div className="text-[#777]">{place}</div>
                            {pinned && <Icon name="pin" className="size-2" />}
                        </div>
                    </li>
                ))}
            </ul>
            <div className="mt-[3px]"><GroupHeading text="最近使用過的檔案 (2)" /></div>
            <table className="mt-[6px] ml-[20px] text-left">
                <tbody>
                    {['111.bat', 'user01.bat'].map((name) => (
                        <tr key={name} className="h-[17px]">
                            <td className="w-[188px]">
                                <span className="flex items-center gap-2 text-[#333]"><Icon name="bat" className="size-[14px]" />{name}</span>
                            </td>
                            <td className="text-[#777]">本機\桌面</td>
                        </tr>
                    ))}
                </tbody>
            </table>
        </div>
    </Explorer>
);

// level, expander, icon, label
const consoleTree = [
    [0, '', 'mgmt', '電腦管理 (本機)'],
    [1, 'chevDown', 'tools', '系統工具'],
    [2, 'chevRight', 'clock', '工作排程器'],
    [2, 'chevRight', 'events', '事件檢視器'],
    [2, 'chevRight', 'shares', '共用資料夾'],
    [2, 'chevDown', 'mgmt', '本機使用者和群組'],
    [3, '', 'folder', '使用者'],
    [3, '', 'folder', '群組'],
    [2, 'chevRight', 'perf', '效能'],
    [2, '', 'device', '裝置管理員'],
    [1, 'chevDown', 'storage', '存放裝置'],
    [2, 'chevRight', 'backup', 'Windows Server Backup'],
    [2, '', 'disk', '磁碟管理'],
    [1, 'chevRight', 'services', '服務與應用程式'],
];

const treeIndent = ['pl-[3px]', 'pl-[2px]', 'pl-[15px]', 'pl-[40px]'];

const ComputerManagement = () => (
    <section className="absolute top-[9px] left-[13px] flex h-[471px] w-[657px] flex-col border border-[#a8a8a8] bg-[#f0f0f0] text-[#222]">
        <header className="flex h-5 items-center gap-1 bg-white pl-[5px] text-[#8a8a8a]">
            <Icon name="mgmt" className="size-3" />
            <h2>電腦管理</h2>
            <WindowButtons />
        </header>
        <div className="flex h-[15px] items-center gap-[11px] border-b border-[#aaa] bg-white pl-[7px]">
            {['檔案(F)', '動作(A)', '檢視(V)', '說明(H)'].map((name) => <button key={name}>{name}</button>)}
        </div>
        <div className="flex h-[21px] items-center gap-[3px] border-b-2 border-[#777] bg-white pl-[2px]">
            <button aria-label="上一頁"><Icon name="backBlue" className="size-3" /></button>
            <button aria-label="下一頁"><Icon name="forwardGray" className="size-3" /></button>
            <span className="mx-px h-3 w-px bg-[#aaa]" />
            <button aria-label="上一層"><Icon name="upFolder" className="size-3" /></button>
        </div>
        <div className="flex min-h-0 flex-1 gap-[2px]">
            <div className="flex w-[127px] flex-col border-r border-b border-[#8f8f8f] bg-white">
                <ul className="flex-1">
                    {consoleTree.map(([level, expander, icon, label]) => (
                        <li key={label} className={`flex h-3 items-center overflow-hidden whitespace-nowrap ${treeIndent[level]}`}>
                            {(level === 1 || level === 2) && (
                                <span className="mr-px flex w-3 shrink-0 justify-center">
                                    {expander && <Icon name={expander} className="size-2 text-[#555]" />}
                                </span>
                            )}
                            <Icon name={icon} className={`mr-[3px] size-3 ${label === '群組' ? 'bg-[#d9d9d9]' : ''}`} />
                            {label}
                        </li>
                    ))}
                </ul>
                <div className="flex h-3 items-center justify-between bg-[#f0f0f0] px-[3px]">
                    <Icon name="chevLeft" className="size-2" />
                    <span className="mr-2 ml-[2px] h-full flex-1 bg-[#cdcdcd]" />
                    <Icon name="chevRight" className="size-[10px]" />
                </div>
            </div>
            <div className="flex w-[399px] items-end border border-t-0 border-[#8f8f8f] bg-white pb-[27px] pl-1">
                <span className="flex items-center gap-1"><Icon name="users" className="size-3" />總經理室</span>
            </div>
            <div className="flex-1 border-l border-[#8f8f8f] bg-white">
                <div className="h-[13px] bg-[#f0f0f0]" />
                {['群組', '總經理室'].map((name, i) => (
                    <div key={name} className={i ? 'mt-1' : ''}>
                        <div className="flex h-[17px] items-center bg-linear-to-b from-[#9db5d8] to-[#a9c1dc] px-1">
                            {name}<Icon name="triUp" className="ml-auto size-2" />
                        </div>
                        <div className="flex h-[15px] items-center pr-1 pl-[20px]">
                            其他動作<Icon name="triRight" className="ml-auto size-2" />
                        </div>
                    </div>
                ))}
            </div>
        </div>
        <div className="flex h-[14px] border-t border-[#e0e0e0]">
            <span className="w-[508px] border-r border-[#ddd]" />
            <span className="w-[90px] border-r border-[#ddd]" />
        </div>
    </section>
);

const ServerManager = () => (
    <section className="flex min-h-0 flex-1 flex-col bg-[#f5f5f5] text-[#888]">
        <header className="flex h-4 shrink-0 items-center gap-[3px] bg-white">
            <Icon name="server" className="ml-px size-[11px]" />
            <h2>伺服器管理員</h2>
            <WindowButtons middle="restore" />
        </header>
        <div className="flex h-[41px] shrink-0 items-center bg-[#404040] pl-[7px]">
            <span className="size-6 rounded-full border border-white" />
        </div>
        <div className="flex min-h-0 flex-1">
            <div className="w-[150px] bg-[#f7f7f7] pt-8">
                <div className="h-4 bg-[#0063b1]" />
                <div className="mt-1 ml-[10px] flex flex-col gap-2">
                    <span className="size-[10px] bg-[#444]" />
                    <span className="size-[10px] bg-[#777]" />
                </div>
            </div>
            <div className="flex flex-1 items-end overflow-hidden border-l border-[#ccc] bg-white">
                <table className="translate-y-[5px] text-left font-bold whitespace-nowrap text-[#222]">
                    <tbody>
                        <tr>
                            <td className="w-[100px] pl-3">WIN-3CCRM2QIB2D</td>
                            <td className="w-[30px]">10149</td>
                            <td className="w-[30px]">警告</td>
                            <td className="w-[210px]">Microsoft-Windows-Time-Service</td>
                            <td className="w-[36px]">系統</td>
                            <td>2019/1/8 下午 03:20:33</td>
                        </tr>
                    </tbody>
                </table>
            </div>
            <div className="flex w-[11px] flex-col items-center bg-[#f0f0f0]">
                <Icon name="chevUp" className="my-[2px] size-2" />
                <span className="h-[114px] w-full bg-[#cdcdcd]" />
                <Icon name="chevDown" className="mt-auto size-2" />
            </div>
        </div>
    </section>
);

const SharedProperties = () => (
    <section className="absolute top-[113px] left-[216px] flex h-[366px] w-[281px] flex-col border border-[#999] bg-[#f0f0f0]">
        <header className="flex h-5 items-center bg-white pr-[5px] pl-1 text-[#8a8a8a]">
            <Icon name="folder" />
            <h2 className="ml-[5px]">Shared - 內容</h2>
            <button aria-label="關閉" className="ml-auto"><Icon name="close" /></button>
        </header>
        <div className="mx-1 mb-[29px] flex-1 border border-t-0 border-[#dcdcdc] bg-white">
            <div className="h-[277px] border border-[#999] bg-[#f0f0f0]">
                <div className="h-5 bg-white pl-[5px] leading-5 text-[#8a8a8a]">進階共用</div>
            </div>
        </div>
    </section>
);

const PermissionCheck = ({ label, checked, onChange }) => (
    <span className="relative mx-auto flex size-[9px]">
        <input type="checkbox" aria-label={label} checked={checked} onChange={onChange} className="peer size-[9px] appearance-none border border-[#444] bg-white" />
        <svg viewBox="0 0 9 9" className="pointer-events-none absolute inset-0 hidden peer-checked:block" aria-hidden="true">
            <path d="M2 4.500l2 2 3.500-4" fill="none" stroke="#222" />
        </svg>
    </span>
);

const accounts = ['Everyone', 'Administrators (WIN-3CCRM2QIB2D\\Administrators)'];

const PermissionsDialog = () => {
    const [account, setAccount] = useState(accounts[1]);
    const [allowed, setAllowed] = useState({ 完全控制: true, 變更: true, 讀取: true });
    const [denied, setDenied] = useState({});

    return (
        <section className="absolute top-[137px] left-[232px] flex h-[342px] w-[281px] flex-col border border-[#777] bg-[#f0f0f0] text-[#222] shadow-md">
            <header className="flex h-5 shrink-0 items-center bg-white pr-[5px] pl-[5px]">
                <Icon name="folder" />
                <h2 className="ml-[3px]">Shared 的權限</h2>
                <button aria-label="關閉" className="ml-auto"><Icon name="close" /></button>
            </header>
            <div className="mt-1 ml-1 flex">
                <button className="z-10 -mb-px h-4 w-[43px] border border-b-0 border-[#dcdcdc] bg-white">共用權限</button>
            </div>
            <div className="mx-1 flex h-[272px] flex-col border border-[#dcdcdc] bg-white px-[10px]">
                <div className="mt-[2px] leading-4">群組或使用者名稱(G):</div>
                <ul className="h-[81px] border border-[#828790]">
                    {accounts.map((name) => (
                        <li key={name}>
                            <button onClick={() => setAccount(name)} className="flex h-[13px] w-full items-center pr-px pl-[3px] text-left">
                                <Icon name="users" className="size-[11px]" />
                                <span className={`h-[13px] flex-1 pl-px leading-3 ${account === name ? 'bg-[#0078d7] text-white' : ''}`}>{name}</span>
                            </button>
                        </li>
                    ))}
                </ul>
                <div className="mt-[5px] flex justify-end gap-[5px]">
                    <button className="h-[17px] w-[58px] border border-[#adadad] bg-[#e1e1e1]">新增(D)...</button>
                    <button className="h-[17px] w-[58px] border border-[#adadad] bg-[#e1e1e1]">移除(R)</button>
                </div>
                <div className="mt-[7px] flex leading-4">
                    <span className="flex-1">Administrators 的權限(P)</span>
                    <span className="w-12 text-center">允許</span>
                    <span className="w-12 text-center">拒絕</span>
                    <span className="w-[5px]" />
                </div>
                <div className="h-[106px] border border-[#828790] pt-px">
                    <table className="w-full">
                        <tbody>
                            {['完全控制', '變更', '讀取'].map((name) => (
                                <tr key={name} className="h-[14px]">
                                    <td className="pl-2">{name}</td>
                                    <td className="w-12">
                                        <PermissionCheck label={`允許 ${name}`} checked={!!allowed[name]} onChange={() => setAllowed({ ...allowed, [name]: !allowed[name] })} />
                                    </td>
                                    <td className="w-[46px]">
                                        <PermissionCheck label={`拒絕 ${name}`} checked={!!denied[name]} onChange={() => setDenied({ ...denied, [name]: !denied[name] })} />
                                    </td>
                                    <td className="w-[10px]" />
                                </tr>
                            ))}
                        </tbody>
                    </table>
                </div>
            </div>
            <div className="mt-[6px] flex justify-end gap-[5px] pr-1">
                <button className="h-[17px] w-[58px] border-2 border-[#0078d7] bg-[#e1e1e1]">確定</button>
                <button className="h-[17px] w-[58px] border border-[#4a9cc8] bg-[#e5f1fb]">取消</button>
                <button disabled className="h-[17px] w-[58px] border border-[#bfbfbf] bg-[#cccccc] text-[#8a8a8a]">套用(A)</button>
            </div>
            <svg viewBox="0 0 12 18" className="absolute top-[325px] left-[194px] h-[14px] w-[9px]" aria-hidden="true">
                <path d="M1 1v14l3.500-3 2.500 5 2-1-2-5h4z" fill="#fff" stroke="#000" />
            </svg>
        </section>
    );
};

const guestBase = [
    { icon: 'win', label: '開始', small: true },
    { icon: 'find', label: '搜尋', small: true },
    { icon: 'taskOld', label: '工作檢視', small: true },
    { icon: 'ie', label: 'Internet Explorer' },
];

const leftTasks = [
    ...guestBase,
    { icon: 'explorer', label: '檔案總管', active: true, open: true },
    { icon: 'powershell', label: 'PowerShell', open: true },
    { icon: 'server', label: '伺服器管理員', open: true },
    { icon: 'mgmt', label: '電腦管理', open: true },
];

const rightTasks = [
    ...guestBase,
    { icon: 'explorer', label: '檔案總管', open: true },
    { icon: 'panel', label: '控制台', open: true },
    { icon: 'server', label: '伺服器管理員', open: true },
    { icon: 'notepad', label: '記事本', open: true },
];

const hostTasks = [
    { icon: 'win', label: '開始', small: true },
    { icon: 'find', label: '搜尋', small: true },
    { icon: 'taskView', label: '工作檢視' },
    { icon: 'ie', label: 'Internet Explorer' },
    { icon: 'chrome', label: 'Chrome', open: true },
    { icon: 'explorer', label: '檔案總管', open: true },
    { icon: 'server', label: '伺服器管理員', open: true },
    { icon: 'hyperv', label: 'Hyper-V', open: true },
    { icon: 'vmconnect', label: '虛擬機器連線', active: true, open: true },
    { icon: 'cmd', label: '命令提示字元', open: true },
    { icon: 'pen', label: 'Epic Pen', open: true, small: true },
    { icon: 'notepad', label: '記事本', open: true },
    { icon: 'panel', label: '控制台', open: true },
    { icon: 'obs', label: 'OBS', open: true },
];

const Shortcut = ({ className }) => (
    <svg viewBox="0 0 9 9" className={`size-[9px] ${className}`} aria-hidden="true">
        <path d="M0 0h9v9H0z" fill="#fff" />
        <path d="M1.500 8c0-3 1-4.500 3-4.500L3.500 2h4v4L6 5C4.500 5 3.500 6 3.500 8z" fill="#2f66b5" />
    </svg>
);

const DesktopIcons = () => (
    <div className="text-white">
        <div className="absolute top-[7px] left-0 flex w-[50px] flex-col items-center">
            <svg viewBox="0 0 26 27" className="h-[27px] w-[26px]" aria-hidden="true">
                <path d="M2 1h17v24H2z" fill="#f0cf74" />
                <path d="M2 1l5 4v21l-5-3z" fill="#ffe9a9" />
                <circle cx="17" cy="12" r="5" fill="#54453b" />
                <path d="M14 13h6v5h-6z" fill="#b07f5c" />
                <path d="M10 27c0-12 14-12 14 0z" fill="#4c9d82" />
            </svg>
        </div>
        <span className="absolute top-[38px] left-[2px]">Ad</span>
        <div className="absolute top-[5px] left-[60px]">
            <svg viewBox="0 0 32 32" className="size-8" aria-hidden="true">
                <rect width="32" height="32" rx="5" fill="#25272c" />
                <circle cx="15" cy="15" r="8.500" fill="none" stroke="#d8252c" strokeWidth="1.300" />
                <circle cx="15" cy="15" r="6.200" fill="#f0373c" />
                <path d="M25 11q-3 4 0 9" fill="none" stroke="#d8252c" strokeWidth="1.500" />
                <circle cx="25" cy="9" r="1" fill="#fff" />
            </svg>
            <Shortcut className="absolute top-6 left-0" />
        </div>
        <span className="absolute top-[176px] left-[6px]">筆</span>
        <span className="absolute top-[325px] left-1">R</span>
        <span className="absolute top-[523px] left-[6px]">E</span>
        <span className="absolute top-[592px] left-1">C</span>
        <a href="#" className="absolute top-[630px] left-0 flex w-[50px] flex-col items-center">
            <span className="relative flex size-[30px] items-center justify-center rounded-full bg-black">
                <Icon name="pen" className="size-[22px]" />
                <Shortcut className="absolute bottom-0 -left-px" />
            </span>
            <span className="mt-[2px] leading-3">Epic Pen</span>
        </a>
    </div>
);

export default function App() {
    return (
        <main className="relative flex min-h-screen w-full flex-col overflow-hidden bg-[#001833] bg-[radial-gradient(ellipse_400px_110px_at_900px_620px,#004a8f_0%,transparent_100%),radial-gradient(ellipse_300px_200px_at_760px_40px,#002750_0%,transparent_100%)] font-['Open_Sans','Noto_Sans_CJK_TC',sans-serif] text-[8px] leading-3">
            <DesktopIcons />

            <VmWindow title="在 A404-00 上的 Server19-04 - 虛擬機器連線" status="狀態: 正在執行" className="left-[601px]">
                <div className="relative flex-1 bg-[#001230] bg-[radial-gradient(ellipse_220px_220px_at_700px_220px,#004f96_0%,transparent_100%),radial-gradient(ellipse_260px_60px_at_240px_430px,#003063_0%,transparent_100%)]">
                    <Watermark color="text-white/45" />
                    <QuickExplorer />
                </div>
                <GuestTaskbar items={rightTasks} />
            </VmWindow>

            <VmWindow title="在 A404-00 上的 Server19-03 - 虛擬機器連線" status="狀態: 正在執行" active className="left-[10px]">
                <ServerManager />
                <ComputerManagement />
                <DriveExplorer />
                <SharedProperties />
                <Watermark color="text-[#b0b0b0]" />
                <PermissionsDialog />
                <GuestTaskbar items={leftTasks} />
            </VmWindow>

            <footer className="mt-auto flex h-[26px] items-stretch bg-[#020307]">
                <div className="flex w-[456px]">
                    {hostTasks.map((item) => <TaskButton key={item.label} item={item} />)}
                </div>
                <div className="ml-auto flex items-center text-white">
                    <Icon name="chevUp" />
                    <Icon name="sound" className="ml-[5px] size-3" />
                    <Icon name="trayNet" className="ml-1 size-3" />
                    <div className="ml-[2px]"><Clock /></div>
                    <button aria-label="通知" className="ml-2 flex w-3"><Icon name="noteEmpty" className="size-3" /></button>
                    <span className="mr-[2px] ml-[13px] h-full w-px bg-[#44474c]" />
                </div>
            </footer>
        </main>
    );
}
